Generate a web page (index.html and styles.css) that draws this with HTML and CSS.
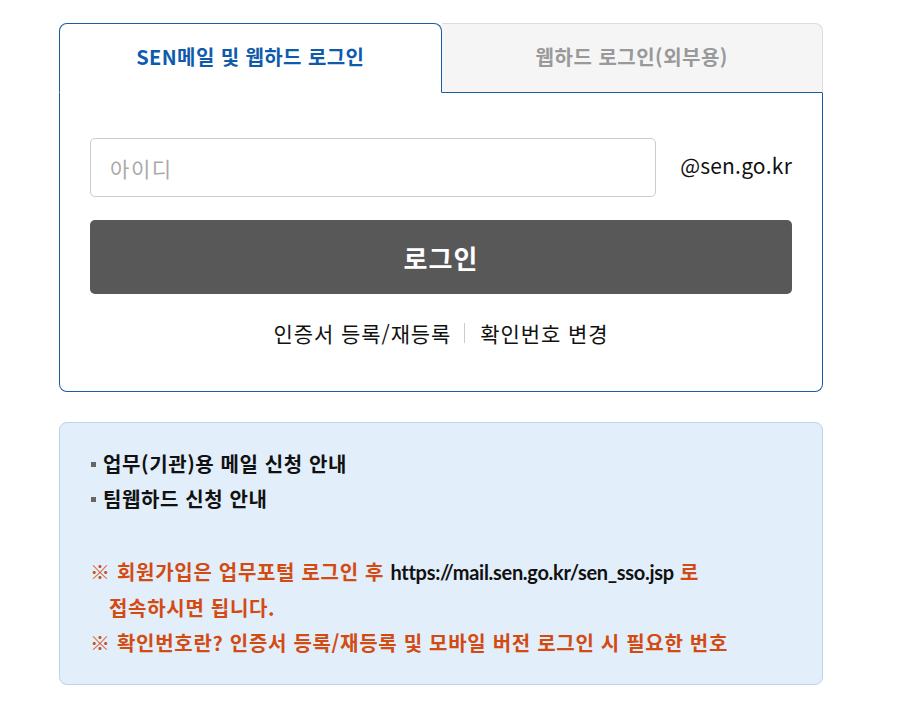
FILE: index.html
```html
<!DOCTYPE html>
<html lang="ko">
<head>
    <meta charset="UTF-8">
    <meta name="viewport" content="width=device-width, initial-scale=1.0">
    <title>SEN메일 및 웹하드 로그인</title>
    <link rel="stylesheet" href="styles.css">
</head>
<body>
    <div class="wrap">
        <div class="login-box">
            <ul class="tabs">
                <li class="tab active">SEN메일 및 웹하드 로그인</li>
                <li class="tab">웹하드 로그인(외부용)</li>
            </ul>
            <div class="tab-body">
                <div class="id-row">
                    <input type="text" class="id-input" placeholder="아이디">
                    <span class="domain">@sen.go.kr</span>
                </div>
                <button class="btn-login">로그인</button>
                <div class="links">
                    <a href="#">인증서 등록/재등록</a>
                    <span class="sep"></span>
                    <a href="#">확인번호 변경</a>
                </div>
            </div>
        </div>

        <div class="info-box">
            <ul class="guide">
                <li>업무(기관)용 메일 신청 안내</li>
                <li>팀웹하드 신청 안내</li>
            </ul>
            <p class="notice">※ 회원가입은 업무포털 로그인 후 <span class="url">https://mail.sen.go.kr/sen_sso.jsp</span> 로<br>
                <span class="indent">접속하시면 됩니다.</span></p>
            <p class="notice">※ 확인번호란? 인증서 등록/재등록 및 모바일 버전 로그인 시 필요한 번호</p>
        </div>
    </div>
</body>
</html>
```

FILE: styles.css
```css
body {
    margin: 0;
    font-family: 'Noto Sans CJK KR', 'Noto Sans', sans-serif;
    background: #fff;
    color: #111;
}
.wrap {
    width: 764px;
    margin-left: 59px;
    padding-top: 23px;
}
.tabs {
    display: flex;
    margin: 0;
    padding: 0;
    list-style: none;
}
.tab {
    flex: 1;
    height: 70px;
    padding-bottom: 4px;
    box-sizing: border-box;
    display: flex;
    align-items: center;
    justify-content: center;
    font-size: 20px;
    font-weight: bold;
    letter-spacing: 0.5px;
    color: #999;
    background: #f5f5f5;
    border: 1px solid #ddd;
    border-left: none;
    border-bottom: 1px solid #1a5ca4;
    border-radius: 0 8px 0 0;
}
.tab.active {
    color: #0f5bab;
    background: #fff;
    letter-spacing: 0.4px;
    border: 1px solid #1a5ca4;
    border-bottom: 1px solid #fff;
    border-radius: 8px 8px 0 0;
}
.tab-body {
    border: 1px solid #1a5ca4;
    border-top: none;
    border-radius: 0 0 8px 8px;
    padding: 45px 30px 45px;
}
.id-row {
    display: flex;
    align-items: center;
    gap: 24px;
}
.id-input {
    flex: 1;
    height: 59px;
    box-sizing: border-box;
    border: 1px solid #ccc;
    border-radius: 5px;
    padding: 0 19px;
    font-family: inherit;
    font-size: 21px;
    letter-spacing: 1.6px;
    color: #333;
}
.id-input::placeholder {
    color: #aaa;
}
.domain {
    font-size: 21px;
    letter-spacing: 0.2px;
    color: #111;
    padding-bottom: 6px;
}
.btn-login {
    display: block;
    width: 100%;
    height: 74px;
    margin-top: 23px;
    border: none;
    border-radius: 5px;
    background: #585858;
    color: #fff;
    font-family: inherit;
    font-size: 26px;
    font-weight: bold;
    letter-spacing: 1px;
    cursor: pointer;
}
.links {
    display: flex;
    justify-content: center;
    align-items: center;
    margin-top: 26px;
    font-size: 21px;
    letter-spacing: 0.9px;
    line-height: 26px;
}
.links a {
    color: #111;
    text-decoration: none;
}
.sep {
    width: 1px;
    height: 20px;
    background: #ccc;
    margin: 0 15px 0 13px;
}
.info-box {
    margin-top: 30px;
    background: #e2eefa;
    border: 1px solid #b8d3ec;
    border-radius: 8px;
    padding: 23px 30px 24px;
}
.guide {
    margin: 0 0 38px;
    padding: 0;
    list-style: none;
}
.guide li {
    position: relative;
    padding-left: 13px;
    font-size: 20px;
    font-weight: bold;
    line-height: 35px;
    letter-spacing: 0.6px;
}
.guide li::before {
    content: "";
    position: absolute;
    left: 1px;
    top: 16px;
    width: 5px;
    height: 5px;
    background: #666;
}
.notice {
    margin: 0;
    font-size: 20px;
    font-weight: bold;
    line-height: 35px;
    letter-spacing: 0.7px;
    color: #d24b12;
}
.url {
    color: #111;
    font-family: Lato, 'Noto Sans', sans-serif;
    letter-spacing: -0.3px;
}
.indent {
    padding-left: 19px;
}
```
